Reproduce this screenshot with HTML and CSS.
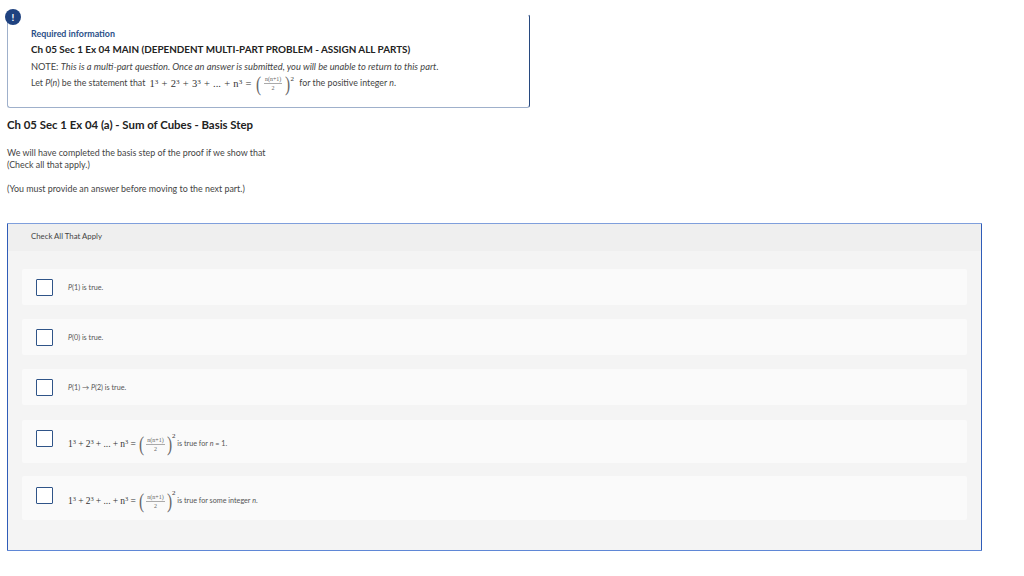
FILE: index.html
```html
<!DOCTYPE html>
<html lang="en">
<head>
<meta charset="utf-8">
<title>Required information</title>
<link rel="stylesheet" href="styles.css">
</head>
<body>
<section class="info">
  <span class="badge">!</span>
  <p class="req">Required information</p>
  <h2 class="main">Ch 05 Sec 1 Ex 04 MAIN (DEPENDENT MULTI-PART PROBLEM - ASSIGN ALL PARTS)</h2>
  <p class="note">NOTE: <i>This is a multi-part question. Once an answer is submitted, you will be unable to return to this part.</i></p>
  <p class="let">Let <i>P</i>(<i>n</i>) be the statement that <span class="math big"><span>1<sup>3</sup> + 2<sup>3</sup> + 3<sup>3</sup> + ... + n<sup>3</sup> = </span><span class="paren">(</span><span class="frac"><span class="num">n(n+1)</span><span class="den">2</span></span><span class="paren">)</span><span class="sq">2</span></span> for the positive integer <i>n</i>.</p>
</section>

<h1 class="title">Ch 05 Sec 1 Ex 04 (a) - Sum of Cubes - Basis Step</h1>

<div class="prompt">
  <p>We will have completed the basis step of the proof if we show that<br>(Check all that apply.)</p>
  <p class="must">(You must provide an answer before moving to the next part.)</p>
</div>

<section class="panel">
  <header class="panel-head">Check All That Apply</header>
  <div class="rows">
    <div class="row"><span class="box"></span><span class="label"><i>P</i>(1) is true.</span></div>
    <div class="row"><span class="box"></span><span class="label"><i>P</i>(0) is true.</span></div>
    <div class="row"><span class="box"></span><span class="label"><i>P</i>(1) → <i>P</i>(2) is true.</span></div>
    <div class="row tall"><span class="box"></span><span class="label"><span class="math small"><span>1<sup>3</sup> + 2<sup>3</sup> + ... + n<sup>3</sup> = </span><span class="paren">(</span><span class="frac"><span class="num">n(n+1)</span><span class="den">2</span></span><span class="paren">)</span><span class="sq">2</span></span> is true for <i>n</i> = 1.</span></div>
    <div class="row tall last"><span class="box"></span><span class="label"><span class="math small"><span>1<sup>3</sup> + 2<sup>3</sup> + ... + n<sup>3</sup> = </span><span class="paren">(</span><span class="frac"><span class="num">n(n+1)</span><span class="den">2</span></span><span class="paren">)</span><span class="sq">2</span></span> is true for some integer <i>n</i>.</span></div>
  </div>
</section>
</body>
</html>
```

FILE: styles.css
```css
* { box-sizing: border-box; }
html, body { margin: 0; padding: 0; background: #fff; }
body {
  width: 1024px;
  height: 576px;
  overflow: hidden;
  padding: 14px 0 0 7px;
  font-family: Lato, "Open Sans", sans-serif;
  color: #333;
}
p, h1, h2 { margin: 0; }

.info {
  position: relative;
  width: 523px;
  height: 94px;
  padding: 13px 0 0 23px;
  border: 1px solid #9fb0cb;
  border-top-color: transparent;
  border-right: 1px solid #27497f;
  border-radius: 3px;
}
.badge {
  position: absolute;
  left: -3px;
  top: -6px;
  width: 16px;
  height: 16px;
  border-radius: 50%;
  background: #1f4280;
  color: #fff;
  font-size: 10px;
  font-weight: 700;
  line-height: 16px;
  text-align: center;
}
.req {
  font-size: 8.9px;
  font-weight: 700;
  line-height: 12px;
  color: #2b4f88;
}
.main {
  margin-top: 3px;
  font-size: 9.9px;
  font-weight: 700;
  line-height: 12px;
  color: #222;
}
.note {
  margin-top: 6px;
  font-size: 9.3px;
  line-height: 12px;
  color: #444;
}
.let {
  margin-top: 0;
  font-size: 8.8px;
  line-height: 20px;
  color: #444;
  white-space: nowrap;
}

.math {
  display: inline-flex;
  align-items: center;
  vertical-align: middle;
  font-family: "Liberation Serif", serif;
  white-space: pre;
  color: #333;
}
.math sup {
  font-size: 0.68em;
  line-height: 0;
  vertical-align: 0.45em;
}
.math.big { font-size: 10.5px; word-spacing: 0.6px; margin: 0 3px 0 2px; }
.math.big .frac { padding: 0 2px; }
.math.small { font-size: 9.5px; word-spacing: -0.2px; }
.frac {
  display: inline-flex;
  flex-direction: column;
  align-items: center;
  padding: 0 1px;
  font-size: 6px;
  line-height: 8px;
  color: #666;
}
.num { border-bottom: 1px solid #aaa; padding: 0 1px; }
.paren {
  font-size: 22px;
  font-weight: 100;
  line-height: 20px;
  color: #666;
  transform: scaleX(0.7);
}
.sq {
  align-self: flex-start;
  font-size: 7px;
  line-height: 10px;
  margin-left: -1px;
}

.title {
  margin-top: 10px;
  font-size: 11.4px;
  font-weight: 700;
  line-height: 13px;
  color: #222;
}
.prompt {
  margin-top: 16px;
  font-size: 8.9px;
  line-height: 12px;
  color: #444;
}
.must { margin-top: 12px; }

.panel {
  width: 975px;
  height: 328px;
  margin-top: 28px;
  background: #f4f4f4;
  border: 1px solid #2f5cb8;
  border-top: 1px solid #7f9fdc;
  border-bottom: 1px solid #5f87d6;
  border-radius: 1px;
}
.panel-head {
  height: 27px;
  padding-left: 23px;
  background: #efefef;
  font-size: 7.8px;
  line-height: 25px;
  color: #444;
}
.rows {
  display: flex;
  flex-direction: column;
  gap: 14px;
  padding: 18px 14px 0 14px;
}
.row {
  display: flex;
  align-items: center;
  height: 36px;
  padding-left: 14px;
  background: #fafafa;
  border-radius: 2px;
}
.row.tall { height: 43px; margin-top: 1px; align-items: flex-start; padding-top: 10px; }
.row.last { height: 44px; margin-top: -1px; padding-top: 11px; }
.box {
  flex: none;
  width: 17px;
  height: 17px;
  background: #fff;
  border: 1px solid #2f5488;
  border-radius: 1px;
}
.label {
  margin: 2px 0 0 15px;
  font-size: 7.2px;
  line-height: 12px;
  color: #555;
  white-space: nowrap;
}
.row.tall .label { height: 26px; margin-top: 1px; line-height: 26px; }
```
